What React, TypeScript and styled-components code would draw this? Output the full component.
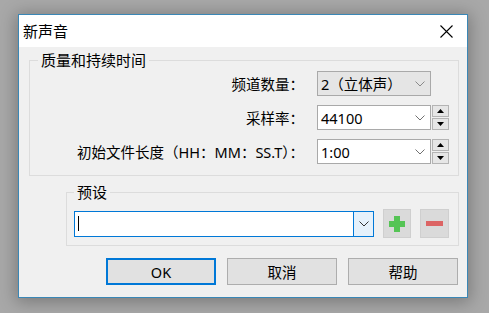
import React from "react";
import styled, { createGlobalStyle } from "styled-components";

const GlobalStyle = createGlobalStyle`
  html, body {
    margin: 0;
    padding: 0;
    background: #a8a8a8;
  }
  body {
    font-family: "Noto Sans", "Noto Sans CJK SC", sans-serif;
    color: #000;
  }
`;

const Desktop = styled.div`
  width: 489px;
  height: 313px;
  padding: 14px 0 0 18px;
  box-sizing: border-box;
  overflow: hidden;
  background: #a8a8a8;
`;

const Window = styled.div`
  width: 450px;
  height: 284px;
  box-sizing: border-box;
  border: 1px solid #3a87b6;
  background: #f0f0f0;
  box-shadow: 0 2px 16px 2px rgba(0, 0, 0, 0.28);
  display: flex;
  flex-direction: column;
`;

const TitleBar = styled.div`
  height: 32px;
  flex: none;
  background: #fff;
  display: flex;
  align-items: center;
  justify-content: space-between;
  padding: 0 14px 0 4px;
  font-size: 15px;
  line-height: 18px;
  font-family: "Noto Sans CJK SC", sans-serif;
`;

const Body = styled.div`
  flex: 1;
  display: flex;
  flex-direction: column;
`;

const Group = styled.fieldset<{ $left: number; $top: number; $padLeft: number; $padTop: number; $padBottom: number }>`
  margin: ${(p) => p.$top}px 8px 0 ${(p) => p.$left}px;
  padding: ${(p) => p.$padTop}px 9px ${(p) => p.$padBottom}px ${(p) => p.$padLeft}px;
  border: 1px solid #dcdcdc;
  min-width: 0;
`;

const Legend = styled.legend`
  padding: 0 3px;
  font-size: 15px;
  line-height: 18px;
  font-family: "Noto Sans CJK SC", sans-serif;
`;

const FormGrid = styled.div`
  display: grid;
  grid-template-columns: 1fr 114px 17px;
  grid-auto-rows: 25px;
  column-gap: 1px;
  row-gap: 9px;
`;

const Label = styled.div`
  grid-column: 1;
  display: flex;
  align-items: center;
  justify-content: flex-end;
  padding-right: 12px;
  font-size: 14.5px;
  white-space: nowrap;
`;

const Combo = styled.div<{ $disabled?: boolean }>`
  grid-column: 2;
  box-sizing: border-box;
  border: 1px solid #a9a9a9;
  background: ${(p) => (p.$disabled ? "#e5e5e5" : "#fff")};
  display: flex;
  align-items: center;
  justify-content: space-between;
  padding: 0 5px 0 3px;
  font-size: 14.5px;
`;

const Spin = styled.div`
  grid-column: 3;
  display: flex;
  flex-direction: column;
  gap: 1px;
`;

const SpinButton = styled.div`
  flex: 1;
  box-sizing: border-box;
  border: 1px solid #b4b4b4;
  background: #e6e6e6;
  display: flex;
  align-items: center;
  justify-content: center;
`;

const PresetRow = styled.div`
  display: flex;
  align-items: center;
  gap: 9px;
  height: 29px;
`;

const PresetInput = styled.div`
  flex: 1;
  height: 26px;
  box-sizing: border-box;
  border: 1px solid #0078d7;
  background: #fff;
  display: flex;
`;

const InputText = styled.div`
  flex: 1;
  display: flex;
  align-items: center;
  padding-left: 3px;
`;

const Caret = styled.div`
  width: 1px;
  height: 15px;
  background: #000;
`;

const DropButton = styled.div`
  width: 19px;
  border-left: 1px solid #0078d7;
  background: #e5f1fb;
  display: flex;
  align-items: center;
  justify-content: center;
`;

const IconButton = styled.div<{ $w: number }>`
  width: ${(p) => p.$w}px;
  height: 29px;
  box-sizing: border-box;
  border: 1px solid #cfcfcf;
  background: #dadada;
  display: flex;
  align-items: center;
  justify-content: center;
`;

const ButtonRow = styled.div`
  display: flex;
  justify-content: flex-end;
  gap: 11px;
  margin: 12px 9px 0 0;
`;

const DialogButton = styled.div<{ $default?: boolean }>`
  width: 110px;
  height: 27px;
  box-sizing: border-box;
  border: ${(p) => (p.$default ? "2px solid #0078d7" : "1px solid #adadad")};
  background: #e1e1e1;
  display: flex;
  align-items: center;
  justify-content: center;
  font-size: 14.5px;
`;

const Chevron = ({ color = "#707070" }: { color?: string }) => (
  <svg width="10" height="6" viewBox="0 0 10 6">
    <polyline points="0.5,0.5 5,5 9.5,0.5" fill="none" stroke={color} strokeWidth="1" />
  </svg>
);

const Triangle = ({ up }: { up?: boolean }) => (
  <svg width="7" height="4" viewBox="0 0 7 4">
    <polygon points={up ? "3.5,0 7,4 0,4" : "0,0 7,0 3.5,4"} fill="#000" />
  </svg>
);

const SpinBox = () => (
  <Spin>
    <SpinButton>
      <Triangle up />
    </SpinButton>
    <SpinButton>
      <Triangle />
    </SpinButton>
  </Spin>
);

const App = () => (
  <Desktop>
    <GlobalStyle />
    <Window>
      <TitleBar>
        <span>新声音</span>
        <svg width="13" height="13" viewBox="0 0 13 13">
          <path d="M0.5 0.5 L12.5 12.5 M12.5 0.5 L0.5 12.5" stroke="#000" strokeWidth="1.1" />
        </svg>
      </TitleBar>
      <Body>
        <Group $left={10} $top={4} $padLeft={8} $padTop={2} $padBottom={11}>
          <Legend>质量和持续时间</Legend>
          <FormGrid>
            <Label>频道数量：</Label>
            <Combo $disabled>
              <span>2（立体声）</span>
              <Chevron color="#8a8a8a" />
            </Combo>
            <Label>采样率：</Label>
            <Combo>
              <span>44100</span>
              <Chevron />
            </Combo>
            <SpinBox />
            <Label>初始文件长度（HH：MM：SS.T）：</Label>
            <Combo>
              <span>1:00</span>
              <Chevron />
            </Combo>
            <SpinBox />
          </FormGrid>
        </Group>
        <Group $left={47} $top={7} $padLeft={7} $padTop={8} $padBottom={7}>
          <Legend>预设</Legend>
          <PresetRow>
            <PresetInput>
              <InputText>
                <Caret />
              </InputText>
              <DropButton>
                <Chevron color="#333" />
              </DropButton>
            </PresetInput>
            <IconButton $w={28}>
              <svg width="16" height="16" viewBox="0 0 16 16">
                <path d="M5 0 H11 V5 H16 V11 H11 V16 H5 V11 H0 V5 H5 Z" fill="#55c455" />
              </svg>
            </IconButton>
            <IconButton $w={29}>
              <svg width="17" height="5" viewBox="0 0 17 5">
                <rect width="17" height="5" fill="#dc6464" />
              </svg>
            </IconButton>
          </PresetRow>
        </Group>
        <ButtonRow>
          <DialogButton $default>OK</DialogButton>
          <DialogButton>取消</DialogButton>
          <DialogButton>帮助</DialogButton>
        </ButtonRow>
      </Body>
    </Window>
  </Desktop>
);

export default App;
